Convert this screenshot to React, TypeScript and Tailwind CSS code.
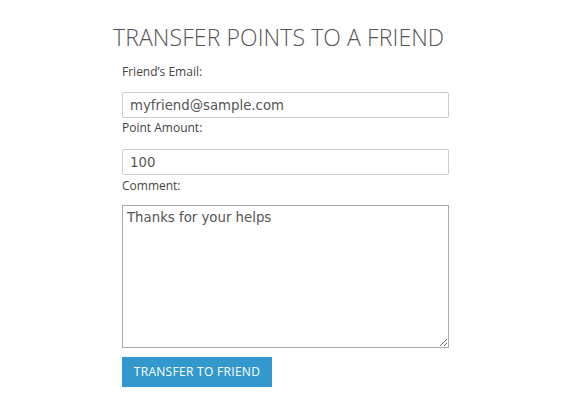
import React from "react";

export default function App() {
  return (
    <div className="w-[566px] h-[400px] bg-white overflow-hidden">
      <div className="pt-[23px] pl-[113px]">
        <h1 className="text-[23px] leading-[28px] font-light tracking-[0.1px] text-[#555] [font-family:'Open_Sans',sans-serif]">
          TRANSFER POINTS TO A FRIEND
        </h1>
      </div>
      <form className="pl-[122px] w-[449px] box-content pt-[12px] flex flex-col">
        <label className="text-[12px] leading-[18px] font-normal text-[#444] [font-family:'Open_Sans',sans-serif] mb-[11px]">
          Friend’s Email:
        </label>
        <input
          readOnly
          value="myfriend@sample.com"
          className="w-[327px] h-[26px] border border-[#ccc] rounded-[2px] px-[7px] text-[13.3px] text-[#555] [font-family:'DejaVu_Sans',sans-serif] outline-none mb-[1px]"
        />
        <label className="text-[12px] leading-[18px] font-normal text-[#444] [font-family:'Open_Sans',sans-serif] mb-[12px]">
          Point Amount:
        </label>
        <input
          readOnly
          value="100"
          className="w-[327px] h-[26px] border border-[#ccc] rounded-[2px] px-[7px] text-[13.3px] text-[#555] [font-family:'DejaVu_Sans',sans-serif] outline-none mb-[2px]"
        />
        <label className="text-[12px] leading-[18px] font-normal text-[#444] [font-family:'Open_Sans',sans-serif] mb-[10px]">
          Comment:
        </label>
        <textarea
          readOnly
          value="Thanks for your helps"
          className="w-[327px] h-[143px] border border-[#aaa] px-[4px] py-[3px] text-[13.3px] leading-[17px] text-[#555] [font-family:'DejaVu_Sans',sans-serif] outline-none resize-y mb-[9px]"
        />
        <button
          type="button"
          className="w-[150px] h-[30px] bg-[#3399cc] text-white text-[12px] tracking-[0.3px] [font-family:'Open_Sans',sans-serif]"
        >
          TRANSFER TO FRIEND
        </button>
      </form>
    </div>
  );
}
